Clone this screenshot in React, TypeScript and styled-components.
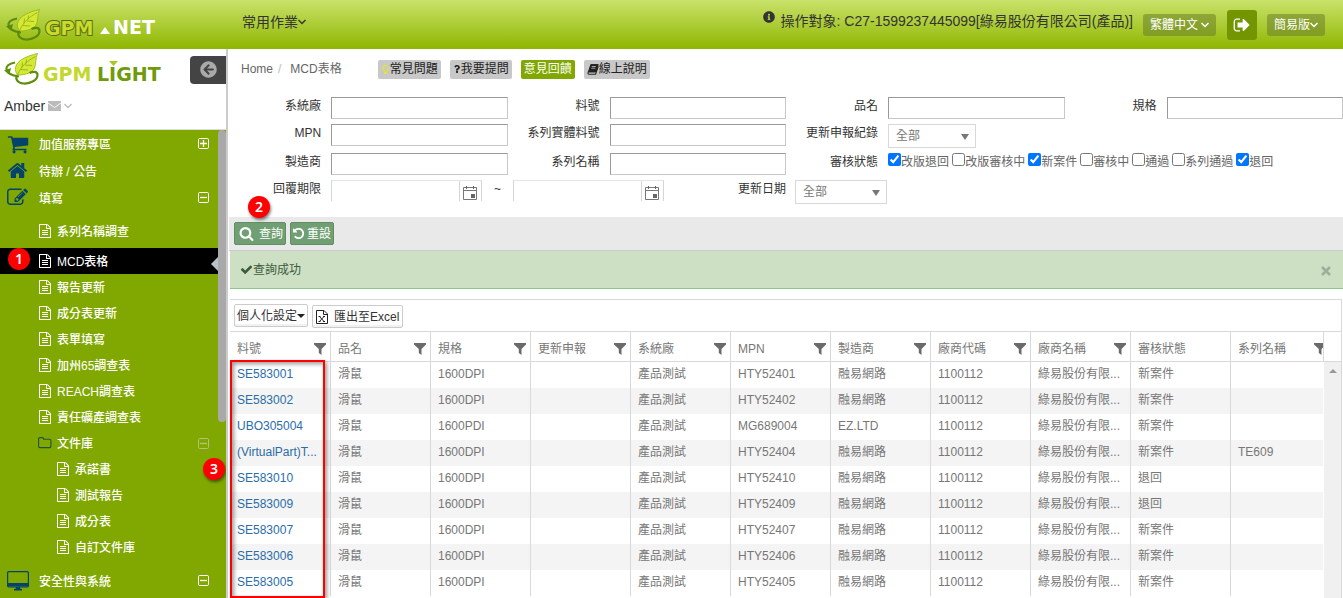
import React from "react";
import styled, { createGlobalStyle, css } from "styled-components";
import { FaArrowCircleLeft, FaInfoCircle, FaQuestion, FaRegLightbulb } from "react-icons/fa";

const GlobalStyle = createGlobalStyle`
  *, *::before, *::after { box-sizing: border-box; }
  body {
    margin: 0;
    color: #333;
    background: #fff;
    font: 12px/16px "Liberation Sans", Arial, "Noto Sans CJK TC", sans-serif;
  }
  button, input, select { font: inherit; color: inherit; margin: 0; }
  button { cursor: pointer; }
  a { color: inherit; text-decoration: none; }
  ul { list-style: none; margin: 0; padding: 0; }
  svg { display: block; flex: none; }
`;

/* ---------- icons ---------- */

const paths = {
  cart: "M704 1536q0 52-38 90t-90 38-90-38-38-90 38-90 90-38 90 38 38 90zm896 0q0 52-38 90t-90 38-90-38-38-90 38-90 90-38 90 38 38 90zm128-1088v512q0 24-16.5 42.5t-40.5 21.5l-1044 122q13 60 13 70 0 16-24 64h920q26 0 45 19t19 45-19 45-45 19h-1024q-26 0-45-19t-19-45q0-11 8-31.5t16-36 21.5-40 15.5-29.5l-177-823h-204q-26 0-45-19t-19-45 19-45 45-19h256q16 0 28.5 6.5t19.5 15.5 13 24.5 8 26 5.5 29.5 4.5 26h1201q26 0 45 19t19 45z",
  home: "M1472 992v480q0 26-19 45t-45 19h-384v-384h-256v384h-384q-26 0-45-19t-19-45v-480q0-1 .5-3t.5-3l575-474 575 474q1 2 1 6zm223-69l-62 74q-8 9-21 11h-3q-13 0-21-7l-692-577-692 577q-12 8-24 7-13-2-21-11l-62-74q-8-10-7-23.5t11-21.5l719-599q32-26 76-26t76 26l244 204v-195q0-14 9-23t23-9h192q14 0 23 9t9 23v408l219 182q10 8 11 21.5t-7 23.5z",
  edit: "M888 1184l116-116-152-152-116 116v56h96v96h56zm440-720q-16-16-33 1l-350 350q-17 17-1 33t33-1l350-350q17-17 1-33zm80 594v190q0 119-84.5 203.5t-203.5 84.5h-832q-119 0-203.5-84.5t-84.5-203.5v-832q0-119 84.5-203.5t203.5-84.5h832q63 0 117 25 15 7 18 23 3 17-9 29l-49 49q-14 14-32 8-23-6-45-6h-832q-66 0-113 47t-47 113v832q0 66 47 113t113 47h832q66 0 113-47t47-113v-126q0-13 9-22l64-64q15-15 35-7t20 29zm-96-738l288 288-672 672h-288v-288zm444 132l-92 92-288-288 92-92q28-28 68-28t68 28l152 152q28 28 28 68t-28 68z",
  file: "M1596 380q28 28 48 76t20 88v1152q0 40-28 68t-68 28h-1344q-40 0-68-28t-28-68v-1600q0-40 28-68t68-28h896q40 0 88 20t76 48zm-444-244v376h376q-10-29-22-41l-313-313q-12-12-41-22zm384 1528v-1024h-416q-40 0-68-28t-28-68v-416h-768v1536h1280zm-1024-864q0-14 9-23t23-9h704q14 0 23 9t9 23v64q0 14-9 23t-23 9h-704q-14 0-23-9t-9-23v-64zm736 224q14 0 23 9t9 23v64q0 14-9 23t-23 9h-704q-14 0-23-9t-9-23v-64q0-14 9-23t23-9h704zm0 256q14 0 23 9t9 23v64q0 14-9 23t-23 9h-704q-14 0-23-9t-9-23v-64q0-14 9-23t23-9h704z",
  search: "M1216 832q0-185-131.5-316.5t-316.5-131.5-316.5 131.5-131.5 316.5 131.5 316.5 316.5 131.5 316.5-131.5 131.5-316.5zm512 832q0 52-38 90t-90 38q-54 0-90-38l-343-342q-179 124-399 124-143 0-273.5-55.5t-225-150-150-225-55.5-273.5 55.5-273.5 150-225 225-150 273.5-55.5 273.5 55.5 225 150 150 225 55.5 273.5q0 220-124 399l343 343q37 37 37 90z",
  undo: "M1664 896q0 156-61 298t-164 245-245 164-298 61q-172 0-327-72.5t-264-204.5q-7-10-6.5-22.5t8.5-20.5l137-138q10-9 25-9 16 2 23 12 73 95 179 147t225 52q104 0 198.5-40.5t163.5-109.5 109.5-163.5 40.5-198.5-40.5-198.5-109.5-163.5-163.5-109.5-198.5-40.5q-98 0-188 35.5t-160 101.5l137 138q31 30 14 69-17 40-59 40h-448q-26 0-45-19t-19-45v-448q0-42 40-59 39-17 69 14l130 129q107-101 244.5-156.5t284.5-55.5q156 0 298 61t245 164 164 245 61 298z",
  check: "M1671 566q0 40-28 68l-724 724-136 136q-28 28-68 28t-68-28l-136-136-362-362q-28-28-28-68t28-68l136-136q28-28 68-28t68 28l294 295 656-657q28-28 68-28t68 28l136 136q28 28 28 68z",
  signOut: "M704 1440q0 4 1 20t.5 26.5-3 23.5-10 19.5-20.5 6.5h-320q-119 0-203.5-84.5t-84.5-203.5v-704q0-119 84.5-203.5t203.5-84.5h320q13 0 22.5 9.5t9.5 22.5q0 4 1 20t.5 26.5-3 23.5-10 19.5-20.5 6.5h-320q-66 0-113 47t-47 113v704q0 66 47 113t113 47h312l11.5 1 11.5 3 8 5.5 7 9 2 13.5zm928-544q0 26-19 45l-544 544q-19 19-45 19t-45-19-19-45v-288h-448q-26 0-45-19t-19-45v-384q0-26 19-45t45-19h448v-288q0-26 19-45t45-19 45 19l544 544q19 19 19 45z",
};

const Glyph = ({ name, size }: { name: keyof typeof paths; size: number }) => (
  <svg width={size} height={size} viewBox="0 0 1792 1792" fill="currentColor" aria-hidden="true">
    <path d={paths[name]} />
  </svg>
);

const AngleDown = () => (
  <svg width="8" height="6" viewBox="0 0 8 6" fill="none" stroke="currentColor" strokeWidth="1.4" aria-hidden="true">
    <path d="M.5 1 4 4.600 7.500 1" />
  </svg>
);

const Toggle = ({ open }: { open: boolean }) => (
  <svg width="11" height="11" viewBox="0 0 11 11" fill="none" stroke="currentColor" aria-hidden="true">
    <rect x=".5" y=".5" width="10" height="10" rx="1.2" />
    <path d={open ? "M2 5.5h7" : "M2 5.5h7M5.500 2v7"} strokeWidth="1.3" />
  </svg>
);

const Folder = () => (
  <svg width="14" height="12" viewBox="0 0 14 12" fill="none" stroke="#23533f" strokeWidth="1.1" aria-hidden="true">
    <path d="M.6 1.800q0-1.200 1.200-1.200h2.600q1.200 0 1.200 1.200v.4h6q1.300 0 1.300 1.300v5.800q0 1.300-1.300 1.300H1.900Q.6 10.600.6 9.300z" />
  </svg>
);

const Desktop = () => (
  <svg width="22" height="20" viewBox="0 0 22 20" aria-hidden="true">
    <rect x=".6" y=".6" width="20.8" height="15.4" rx="1.2" fill="none" stroke="#04436b" strokeWidth="1.2" />
    <path d="M1 12h20v3.500H1zM9 16h4l.6 2H15v1.500H7V18h1.400z" fill="#04436b" />
  </svg>
);

const Calendar = () => (
  <svg width="14" height="16" viewBox="0 0 14 16" aria-hidden="true">
    <path d="M.5 2.500h13v12H.5zM.5 5.500h13" fill="none" stroke="#777" />
    <path d="M3 1h1v3H3zM10 1h1v3h-1zM8 9h4v4H8z" fill="#666" />
  </svg>
);

const Book = () => (
  <svg width="12" height="11" viewBox="0 0 12 11" fill="none" stroke="currentColor" aria-hidden="true">
    <path d="M3.800.600h7.400L8.800 8H1.400z" fill="currentColor" />
    <path d="M1.300 7.800q-.9 2.400.7 2.400h6.600l2.700-8" strokeWidth="1.1" />
    <path d="M4.800 2.500h4M4.300 4.200h4" stroke="#c8c8c8" strokeWidth=".8" />
  </svg>
);

const Funnel = () => (
  <svg width="12" height="12" viewBox="0 0 12 12" fill="#6a6a6a" aria-hidden="true">
    <path d="M0 0h12v1.500L7.500 6v6L4.800 10V6L0 1.500z" />
  </svg>
);

const ExcelFile = () => (
  <svg width="12" height="14" viewBox="0 0 12 14" fill="none" stroke="#222" aria-hidden="true">
    <path d="M.5.500h7.500l3.500 3.500v9.500H.500zM7.500.500v4h4" />
    <path d="M3.500 6.500l4.500 5M8 6.500l-4.500 5M2.500 6.500h2M7 6.500h2M2.500 11.500h2M7 11.500h2" />
  </svg>
);

const Leaf = ({ dark }: { dark: string }) => (
  <svg width="36" height="33" viewBox="0 0 36 33" aria-hidden="true">
    <path d="M11 9.500C5 10.500 2 13 2.500 16.500 3 20 8 22.500 15 23.500" fill="none" stroke={dark} strokeWidth="2" />
    <path d="M0 17.500l7-2.500-1.500 6.500z" fill={dark} />
    <path d="M33.500.5C23 3 13 7 11.500 14.500c-.5 3 .5 6 2.500 7.500 7 0 14-2 16.500-7C32.500 11 31 6 33.500.5z" fill="#d5e833" stroke="#93b31d" strokeWidth=".8" />
    <path d="M31.500 3.500C23 8 17 13 13.500 22M18 14.500l.5-5M22 10.500l.5-4M17 16.500l7 .500M21 12l7 .5" fill="none" stroke="#8dad18" strokeWidth=".8" />
    <path d="M13 22c-2 4 .5 8 6.500 8.500 7 .5 14-3.500 14-8.500 0-3.500-4-4-8-2" fill="none" stroke={dark} strokeWidth="2.200" />
  </svg>
);

/* ---------- shell ---------- */

const Shell = styled.div`
  display: flex;
  flex-direction: column;
  height: 100vh;
  overflow: hidden;
`;

const TopBar = styled.header`
  display: flex;
  flex: none;
  height: 49px;
  padding-right: 18px;
  background: linear-gradient(#c9e26a, #8fb600);
`;

const Brand = styled.a`
  display: flex;
  width: 242px;
  padding: 9px 0 0 6px;
`;

const TopMenu = styled.button`
  display: flex;
  align-items: center;
  height: 20px;
  margin-top: 12px;
  padding: 0;
  border: 0;
  background: none;
  font-size: 14px;
`;

const TopRight = styled.div`
  display: flex;
  align-items: flex-start;
  margin-left: auto;
`;

const Target = styled.span`
  display: flex;
  gap: 6px;
  margin: 11px 10px 0 0;
  font-size: 14px;
  line-height: 20px;
`;

const TopButton = styled.button<{ $tight?: boolean }>`
  display: flex;
  align-items: center;
  gap: ${(p) => (p.$tight ? 0 : 3)}px;
  height: 22px;
  margin-top: 14px;
  padding: 0 7px;
  border: 0;
  border-radius: 3px;
  background: rgba(100, 120, 40, 0.5);
  color: #fff;
`;

const SignOut = styled.button`
  display: flex;
  align-items: center;
  justify-content: center;
  width: 30px;
  height: 30px;
  margin: 10px 10px 0 11px;
  padding: 0;
  border: 0;
  border-radius: 3px;
  background: #739600;
  color: #fff;
`;

const Body = styled.div`
  display: flex;
  flex: 1;
  min-height: 0;
`;

/* ---------- sidebar ---------- */

const Side = styled.aside`
  display: flex;
  flex: none;
  flex-direction: column;
  width: 228px;
  border-right: 2px solid #ccc;
`;

const SideHead = styled.div`
  flex: none;
  height: 81px;
  border-bottom: 1px solid #ddd;
`;

const SideLogo = styled.div`
  display: flex;
  justify-content: space-between;
  padding: 4px 0 0 4px;
`;

const Collapse = styled.button`
  display: flex;
  align-items: center;
  width: 36px;
  height: 28px;
  margin-top: 3px;
  padding: 0 0 2px 10px;
  border: 0;
  border-radius: 4px 0 0 4px;
  background: #444;
  color: #aaa;
`;

const User = styled.button`
  display: flex;
  align-items: center;
  gap: 3px;
  margin-top: 9px;
  padding: 0 4px;
  border: 0;
  background: none;
  font-size: 14px;
  line-height: 20px;
  svg { color: #bbb; }
`;

const Menu = styled.nav`
  position: relative;
  flex: 1;
  min-height: 0;
  overflow: hidden;
  background: #80a800;
  color: #fff;
  font-weight: 500;
`;

const ScrollThumb = styled.div`
  position: absolute;
  top: 0;
  right: 0;
  width: 8px;
  height: 292px;
  border-radius: 4px;
  background: #a9a9a9;
`;

const SubList = styled.ul`
  padding: 7px 0;
`;

const MenuItem = styled.li<{ $level?: number; $active?: boolean; $spaced?: boolean }>`
  position: relative;
  margin-bottom: ${(p) => (p.$spaced ? 4 : 0)}px;
  background: ${(p) => (p.$active ? "#000" : "none")};
  > a {
    display: flex;
    align-items: center;
    height: ${(p) => (p.$level ? 26 : 27)}px;
    padding: 2px 17px 0 ${(p) => (p.$level === 2 ? 56 : p.$level === 1 ? 38 : 7)}px;
  }
`;

const IconSlot = styled.span<{ $wide?: boolean }>`
  display: flex;
  flex: none;
  width: ${(p) => (p.$wide ? 32 : 19)}px;
  margin-top: -2px;
  color: ${(p) => (p.$wide ? "#04436b" : "#fff")};
`;

const ToggleSlot = styled.span<{ $dim?: boolean }>`
  margin: -2px 0 0 auto;
  color: ${(p) => (p.$dim ? "#b5c37a" : "#fff")};
`;

const ActiveMark = styled.span`
  position: absolute;
  top: 9px;
  right: 8px;
  border: 7px solid transparent;
  border-left: 0;
  border-right: 7px solid #b8c4cc;
`;

const Badge = styled.span<{ $x: number; $y: number }>`
  position: absolute;
  z-index: 3;
  left: ${(p) => p.$x}px;
  top: ${(p) => p.$y}px;
  width: 22px;
  height: 22px;
  border-radius: 50%;
  background: #f00;
  box-shadow: 1px 2px 3px rgba(0, 0, 0, 0.5);
  color: #fff;
  font: 600 14px/22px "Noto Sans", sans-serif;
  text-align: center;
`;

/* ---------- main ---------- */

const Main = styled.main`
  display: flex;
  flex: 1;
  flex-direction: column;
  min-width: 0;
  padding-left: 1px;
`;

const Crumbs = styled.div`
  display: flex;
  align-items: center;
  height: 40px;
  padding: 0 12px;
  color: #666;
`;

const Slash = styled.span`
  margin: 0 9px 0 5px;
  color: #bbb;
`;

const HelpLinks = styled.div`
  display: flex;
  gap: 9px;
  margin-left: 36px;
`;

const HelpLink = styled.a<{ $accent?: boolean }>`
  display: flex;
  align-items: center;
  height: 19px;
  padding: 0 3px;
  border-radius: 2px;
  background: ${(p) => (p.$accent ? "#80a800" : "#c8c8c8")};
  color: ${(p) => (p.$accent ? "#fff" : "#222")};
`;

const Filters = styled.form`
  display: grid;
  grid-template-columns: repeat(4, 11fr 19fr);
  grid-template-rows: 27px 29px 27px 37px;
  align-items: start;
  padding-top: 8px;
  line-height: 18px;
`;

const Label = styled.label`
  padding-right: 10px;
  text-align: right;
  white-space: nowrap;
`;

const TextInput = styled.input`
  width: 100%;
  height: 22px;
  padding: 0 4px;
  border: 1px solid #c8c8c8;
  border-top-color: #999;
  border-left-color: #999;
  background: #fff;
`;

const SelectBox = styled.span<{ $wide?: boolean }>`
  position: relative;
  display: block;
  width: ${(p) => (p.$wide ? 92 : 88)}px;
  margin-left: ${(p) => (p.$wide ? 9 : 0)}px;
  &::after {
    content: "";
    position: absolute;
    top: 10px;
    right: 7px;
    border: 4px solid transparent;
    border-top: 6px solid #777;
    border-bottom: 0;
    pointer-events: none;
  }
  select {
    width: 100%;
    height: 24px;
    padding: 0 7px;
    border: 1px solid #d9d9d9;
    border-radius: 0;
    background: #fff;
    color: #777;
    appearance: none;
  }
`;

const Checks = styled.div`
  display: flex;
  grid-column: span 3;
  gap: 3px;
  color: #666;
  white-space: nowrap;
  label { display: flex; align-items: flex-start; }
  input { width: 13px; height: 13px; }
`;

const DateCell = styled.div`
  display: flex;
  grid-column: span 3;
`;

const DateField = styled.span`
  display: flex;
  width: 151px;
  height: 21px;
  border: 1px solid #d5d5d5;
  border-bottom: 0;
  border-top-color: #e4e4e4;
  input { flex: 1; min-width: 0; border: 0; padding: 0 4px; background: none; }
  button {
    width: 22px;
    padding: 3px 0 0 3px;
    border: 0;
    border-left: 1px solid #d5d5d5;
    background: none;
  }
`;

const Tilde = styled.span`
  width: 31px;
  text-align: center;
`;

const EndLabel = styled.label`
  margin-left: auto;
`;

const ActionBar = styled.div`
  display: flex;
  gap: 4px;
  height: 34px;
  padding: 5px 5px 0;
  border-bottom: 1px solid #c8cbce;
  background: #e9e9e9;
`;

const ActionButton = styled.button<{ $roomy?: boolean }>`
  display: flex;
  align-items: center;
  gap: ${(p) => (p.$roomy ? 5 : 2)}px;
  height: 23px;
  padding: 0 2px 0 ${(p) => (p.$roomy ? 4 : 1)}px;
  border: 1px solid #5f8f63;
  border-radius: 2px;
  background: #6f9f73;
  color: #fff;
`;

const Alert = styled.div`
  display: flex;
  align-items: center;
  height: 38px;
  margin-left: 1px;
  padding: 0 12px 0 10px;
  border-bottom: 1px solid #8cc68c;
  background: #cde0c4;
  color: #3c5a3c;
`;

const Close = styled.button`
  margin: 3px 0 0 auto;
  padding: 0;
  border: 0;
  background: none;
  color: #9fae9a;
`;

const Panel = styled.section`
  position: relative;
  display: flex;
  flex: 1;
  flex-direction: column;
  min-height: 0;
  margin: 10px 1px 0;
  border: 1px solid #d9d9d9;
  border-width: 1px 1px 0 0;
`;

const GridTools = styled.div`
  display: flex;
  align-items: flex-start;
  gap: 4px;
  height: 31px;
  padding: 4px;
`;

const ToolButton = styled.button<{ $tall?: boolean }>`
  display: flex;
  align-items: center;
  gap: ${(p) => (p.$tall ? 6 : 0)}px;
  height: 23px;
  margin-top: ${(p) => (p.$tall ? 1 : 0)}px;
  padding: ${(p) => (p.$tall ? "0 3px" : "0 2px")};
  border: 1px solid #ccc;
  border-radius: 2px;
  background: #fff;
  box-shadow: inset 0 -2px 0 #f1f1f1;
`;

const Caret = styled.i`
  border: 4px solid transparent;
  border-top-color: #222;
  border-bottom: 0;
`;

const GridArea = styled.div`
  display: flex;
  flex: 1;
  min-height: 0;
`;

const TableClip = styled.div`
  flex: 1;
  min-width: 0;
  overflow: hidden;
`;

const Table = styled.table`
  width: 100%;
  min-width: 1100px;
  border-spacing: 0;
  table-layout: fixed;
  color: #777;
`;

const cell = css`
  height: 26px;
  padding: 0 7px;
  border-left: 1px solid #d9d9d9;
  text-align: left;
  font-weight: 400;
  white-space: nowrap;
  overflow: hidden;
  &:first-child { border-left: 0; }
`;

const Th = styled.th`
  ${cell}
  height: 31px;
  padding: 4px 4px 0 7px;
  border-top: 1px solid #d9d9d9;
  border-bottom: 1px solid #d9d9d9;
  > span { display: flex; align-items: center; justify-content: space-between; }
`;

const Td = styled.td`
  ${cell}
  padding-bottom: 2px;
  a { color: #2a6da8; }
`;

const Tr = styled.tr`
  &:nth-child(even) { background: #f4f4f4; }
`;

const ScrollTrack = styled.div`
  display: flex;
  flex: none;
  flex-direction: column;
  width: 18px;
`;

const TrackHead = styled.div`
  height: 31px;
  border: 1px solid #d9d9d9;
  border-right: 0;
`;

const TrackBody = styled.div`
  flex: 1;
  margin-left: 1px;
  padding: 7px 0 0 5px;
  background: #f0f0f0;
  &::before {
    content: "";
    display: block;
    width: 8px;
    border: 4px solid transparent;
    border-top: 0;
    border-bottom-color: #999;
  }
`;

const Highlight = styled.div`
  position: absolute;
  top: 60px;
  bottom: 0;
  left: 0;
  width: 95px;
  border: 2px solid #f00;
  box-shadow: 2px 2px 4px rgba(0, 0, 0, 0.4), inset 2px 2px 4px rgba(0, 0, 0, 0.4);
  pointer-events: none;
`;

const docs = ["系列名稱調查", "MCD表格", "報告更新", "成分表更新", "表單填寫", "加州65調查表", "REACH調查表", "責任礦產調查表"];
const library = ["承諾書", "測試報告", "成分表", "自訂文件庫"];
const columns = ["料號", "品名", "規格", "更新申報", "系統廠", "MPN", "製造商", "廠商代碼", "廠商名稱", "審核狀態", "系列名稱"];
const statuses: [string, boolean][] = [
  ["改版退回", true], ["改版審核中", false], ["新案件", true], ["審核中", false],
  ["通過", false], ["系列通過", false], ["退回", true],
];

const row = (part: string, mpn: string, state = "新案件", spec = "1600DPI", maker = "融易網路", series = "") =>
  [part, "滑鼠", spec, "", "產品測試", mpn, maker, "1100112", "綠易股份有限...", state, series];

const rows = [
  row("SE583001", "HTY52401"),
  row("SE583002", "HTY52402"),
  row("UBO305004", "MG689004", "新案件", "1600PDI", "EZ.LTD"),
  row("(VirtualPart)T...", "HTY52404", "新案件", "1600DPI", "融易網路", "TE609"),
  row("SE583010", "HTY52410", "退回"),
  row("SE583009", "HTY52409", "退回"),
  row("SE583007", "HTY52407"),
  row("SE583006", "HTY52406"),
  row("SE583005", "HTY52405"),
];

const Field = ({ id, label }: { id: string; label: string }) => (
  <>
    <Label htmlFor={id}>{label}</Label>
    <TextInput id={id} />
  </>
);

const DateInput = ({ id, label }: { id: string; label: string }) => (
  <DateField>
    <input id={id} aria-label={label} />
    <button type="button" aria-label="calendar"><Calendar /></button>
  </DateField>
);

const Sidebar = () => (
  <Side>
    <SideHead>
      <SideLogo>
        <svg width="164" height="34" viewBox="0 0 164 34" fontFamily="DejaVu Sans" fontWeight="700" fontSize="19">
          <Leaf dark="#5f8f0a" />
          <text x="39" y="28" fill="#c3d82c">GPM</text>
          <text x="93" y="28" fill="#6f9a0a">LIGHT</text>
          <path d="M105 8h9l-4.500 5z" fill="#a9c91f" />
        </svg>
        <Collapse aria-label="collapse"><FaArrowCircleLeft size={17} /></Collapse>
      </SideLogo>
      <User>
        Amber
        <svg width="13" height="10" viewBox="0 0 13 10" fill="currentColor">
          <path d="M0 0h13v10H0z" /><path d="M0 2l6.500 4.500L13 2" fill="none" stroke="#fff" strokeWidth=".9" />
        </svg>
        <AngleDown />
      </User>
    </SideHead>
    <Menu>
      <ul>
        <MenuItem>
          <a href="#value"><IconSlot $wide><Glyph name="cart" size={22} /></IconSlot>加值服務專區<ToggleSlot><Toggle open={false} /></ToggleSlot></a>
        </MenuItem>
        <MenuItem>
          <a href="#todo"><IconSlot $wide><Glyph name="home" size={21} /></IconSlot>待辦 / 公告</a>
        </MenuItem>
        <MenuItem>
          <a href="#fill"><IconSlot $wide><Glyph name="edit" size={21} /></IconSlot>填寫<ToggleSlot><Toggle open /></ToggleSlot></a>
          <SubList>
            {docs.map((name, i) => (
              <MenuItem key={name} $level={1} $active={i === 1} $spaced={i === 0}>
                <a href="#doc"><IconSlot><Glyph name="file" size={14} /></IconSlot>{name}</a>
                {i === 1 && <ActiveMark />}
              </MenuItem>
            ))}
            <MenuItem $level={1}>
              <a href="#library"><IconSlot><Folder /></IconSlot>文件庫<ToggleSlot $dim><Toggle open /></ToggleSlot></a>
              <ul>
                {library.map((name) => (
                  <MenuItem key={name} $level={2}>
                    <a href="#doc"><IconSlot><Glyph name="file" size={14} /></IconSlot>{name}</a>
                  </MenuItem>
                ))}
              </ul>
            </MenuItem>
          </SubList>
        </MenuItem>
        <MenuItem>
          <a href="#security"><IconSlot $wide><Desktop /></IconSlot>安全性與系統<ToggleSlot><Toggle open /></ToggleSlot></a>
        </MenuItem>
      </ul>
      <ScrollThumb />
      <Badge $x={8} $y={118}>1</Badge>
      <Badge $x={203} $y={328}>3</Badge>
    </Menu>
  </Side>
);

export default function App() {
  return (
    <Shell>
      <GlobalStyle />
      <TopBar>
        <Brand href="#home" aria-label="GPM.NET">
          <svg width="154" height="34" viewBox="0 0 154 34" fontFamily="DejaVu Sans" fontWeight="700" fontSize="19">
            <Leaf dark="#5c8a10" />
            <text x="39" y="26" fill="#c9dc2c" stroke="#5b6f10" strokeWidth="2" paintOrder="stroke">GPM</text>
            <path d="M94 25l5-7 5 7z" fill="#fff" />
            <text x="107" y="25" fill="#fff">NET</text>
          </svg>
        </Brand>
        <TopMenu>常用作業<AngleDown /></TopMenu>
        <TopRight>
          <Target><FaInfoCircle size={12} />操作對象: C27-1599237445099[綠易股份有限公司(產品)]</Target>
          <TopButton>繁體中文<AngleDown /></TopButton>
          <SignOut aria-label="sign out"><Glyph name="signOut" size={18} /></SignOut>
          <TopButton $tight>簡易版<AngleDown /></TopButton>
        </TopRight>
      </TopBar>
      <Body>
        <Sidebar />
        <Main>
          <Crumbs>
            <a href="#home">Home</a><Slash>/</Slash><span>MCD表格</span>
            <HelpLinks>
              <HelpLink href="#faq"><FaRegLightbulb size={9} color="#ee0" />常見問題</HelpLink>
              <HelpLink href="#ask"><FaQuestion size={8} />我要提問</HelpLink>
              <HelpLink href="#feedback" $accent>意見回饋</HelpLink>
              <HelpLink href="#manual"><Book />線上說明</HelpLink>
            </HelpLinks>
          </Crumbs>
          <Filters>
            <Field id="factory" label="系統廠" />
            <Field id="part" label="料號" />
            <Field id="name" label="品名" />
            <Field id="spec" label="規格" />
            <Field id="mpn" label="MPN" />
            <Field id="seriesPart" label="系列實體料號" />
            <Label htmlFor="record">更新申報紀錄</Label>
            <SelectBox><select id="record"><option>全部</option></select></SelectBox>
            <span /><span />
            <Field id="maker" label="製造商" />
            <Field id="series" label="系列名稱" />
            <Label as="span">審核狀態</Label>
            <Checks>
              {statuses.map(([name, on]) => (
                <label key={name}><input type="checkbox" defaultChecked={on} />{name}</label>
              ))}
            </Checks>
            <Label htmlFor="from">回覆期限</Label>
            <DateCell>
              <DateInput id="from" label="回覆期限" />
              <Tilde>~</Tilde>
              <DateInput id="to" label="回覆期限" />
              <EndLabel htmlFor="updated">更新日期</EndLabel>
            </DateCell>
            <SelectBox $wide><select id="updated"><option>全部</option></select></SelectBox>
          </Filters>
          <ActionBar>
            <ActionButton $roomy><Glyph name="search" size={15} />查詢</ActionButton>
            <ActionButton><Glyph name="undo" size={13} />重設</ActionButton>
          </ActionBar>
          <Alert role="status">
            <Glyph name="check" size={13} />查詢成功
            <Close aria-label="close">
              <svg width="10" height="10" viewBox="0 0 10 10" fill="none" stroke="currentColor" strokeWidth="2.6"><path d="M1 1l8 8M9 1L1 9" /></svg>
            </Close>
          </Alert>
          <Panel>
            <GridTools>
              <ToolButton>個人化設定<Caret /></ToolButton>
              <ToolButton $tall><ExcelFile />匯出至Excel</ToolButton>
            </GridTools>
            <GridArea>
              <TableClip>
                <Table>
                  <thead>
                    <tr>
                      {columns.map((name) => (
                        <Th key={name}><span>{name}{name !== "審核狀態" && <Funnel />}</span></Th>
                      ))}
                    </tr>
                  </thead>
                  <tbody>
                    {rows.map((cells) => (
                      <Tr key={cells[0]}>
                        {cells.map((value, i) => (
                          <Td key={i}>{i === 0 ? <a href="#part">{value}</a> : value}</Td>
                        ))}
                      </Tr>
                    ))}
                  </tbody>
                </Table>
              </TableClip>
              <ScrollTrack><TrackHead /><TrackBody /></ScrollTrack>
            </GridArea>
            <Highlight />
            <Badge $x={18} $y={-104}>2</Badge>
          </Panel>
        </Main>
      </Body>
    </Shell>
  );
}
